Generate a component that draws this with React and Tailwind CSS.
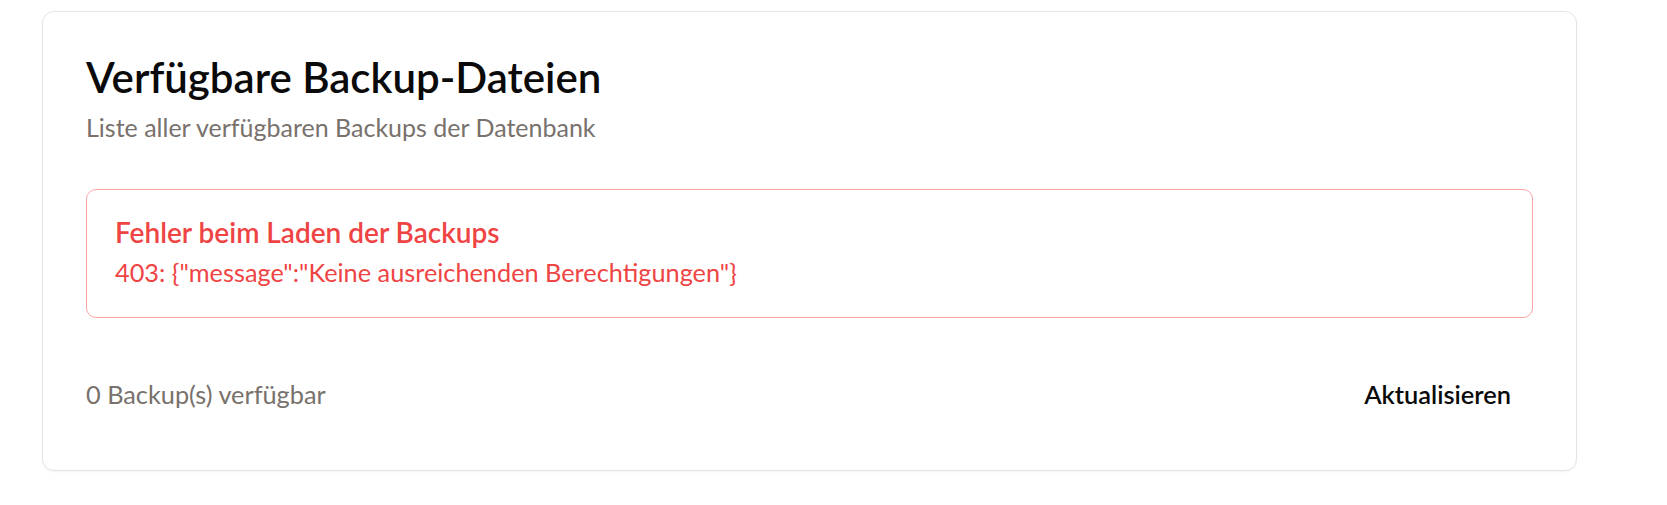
import React from "react";

export default function App() {
  return (
    <div className="min-h-[505px] w-full bg-white pt-[11px] font-['Lato',sans-serif]">
      <div className="ml-[42px] w-[1535px] rounded-[12px] border border-[#e5e5e5] bg-white px-[43px] pt-[40px] pb-[58px] shadow-[0_1px_2px_rgba(0,0,0,0.05)]">
        <div className="flex flex-col">
          <h2 className="text-[42px] font-semibold leading-[50px] text-[#0a0a0a]">
            Verfügbare Backup-Dateien
          </h2>
          <p className="mt-[7px] text-[25px] leading-[36px] text-[#78716c]">
            Liste aller verfügbaren Backups der Datenbank
          </p>
        </div>

        <div className="mt-[44px] rounded-[10px] border border-[#fca5a5] px-[28px] pt-[25px] pb-[29px]">
          <h3 className="text-[28px] font-semibold leading-[34px] text-[#ef4444]">
            Fehler beim Laden der Backups
          </h3>
          <p className="mt-[7px] text-[25.3px] leading-[32px] text-[#ef4444]">
            403: {'{"message":"Keine ausreichenden Berechtigungen"}'}
          </p>
        </div>

        <div className="mt-[58px] flex h-[36px] items-center justify-between">
          <span className="text-[25.3px] leading-[36px] text-[#78716c]">
            0 Backup(s) verfügbar
          </span>
          <button
            type="button"
            className="flex h-[36px] items-center px-[22px] text-[25.4px] font-semibold leading-[36px] text-[#0a0a0a]"
          >
            Aktualisieren
          </button>
        </div>
      </div>
    </div>
  );
}
